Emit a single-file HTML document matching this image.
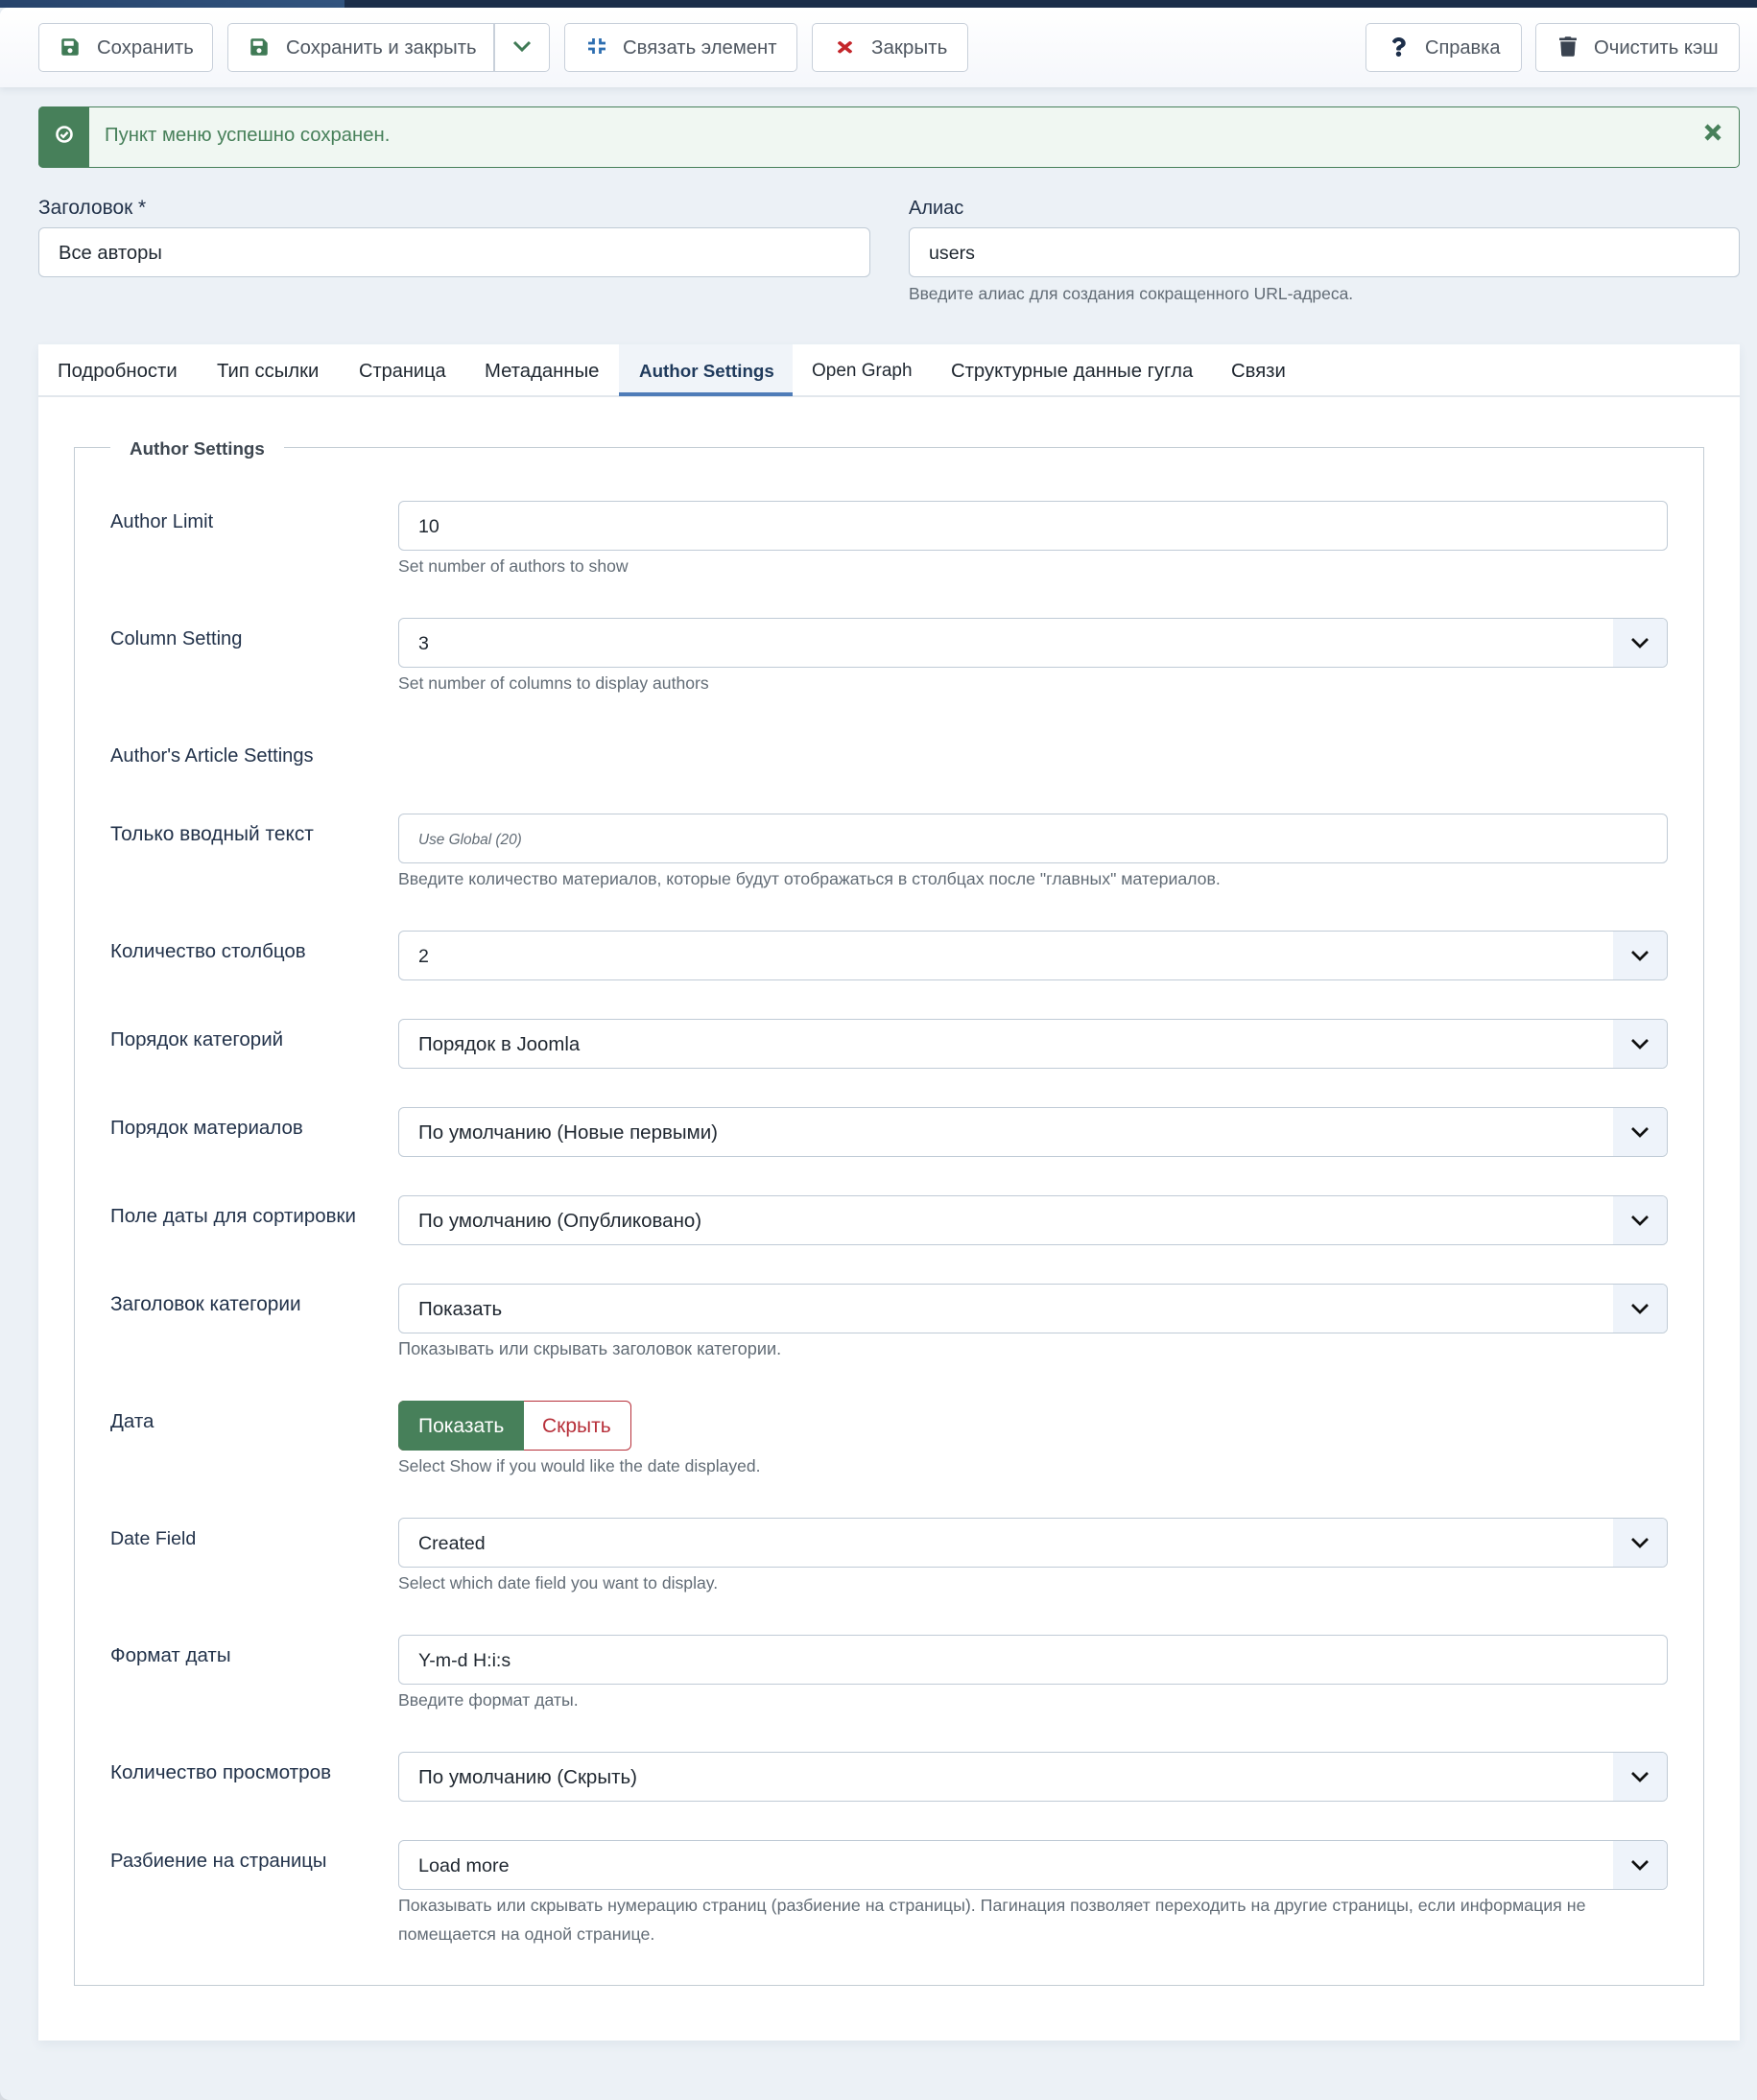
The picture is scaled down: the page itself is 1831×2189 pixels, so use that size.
<!DOCTYPE html>
<html lang="ru">
<head>
<meta charset="utf-8">
<title>Author Settings</title>
<style>
html,body{margin:0;padding:0;width:1831px;height:2189px;overflow:hidden;background:#d5dae0}
*{box-sizing:border-box}
#p{position:relative;width:1831px;height:2189px;background:#ecf1f6;overflow:hidden;border-bottom-left-radius:10px;font-family:"Liberation Sans",sans-serif;font-size:19px;color:#22324a}
#p>*{position:absolute}
.t{white-space:nowrap;line-height:30px;height:30px;margin-top:1.4px}
.lb{left:115px;color:#22324a;font-size:20.5px}
.le{font-size:20.1px}
.v{left:436px;color:#1f2730;font-size:20.5px;margin-top:.5px}
.ve{font-size:19.6px}
.h{left:415px;color:#626c76;font-size:17.8px}
.he{font-size:17.6px}
.b{top:24px;height:51px;background:#fff;border:1.5px solid #c8d0da;border-radius:5px}
.bt{top:34px;color:#4f5761;font-size:20.3px}
.i{left:415px;width:1323px;height:52px;background:#fff;border:1.5px solid #c0cbd6;border-radius:6px}
.s:after{content:"";position:absolute;right:0;top:0;bottom:0;width:56px;background:#eef3fa;border-radius:0 5px 5px 0}
.c{left:1698px;width:22px;height:14px;z-index:2}
.tb{top:371px;color:#1f2730;font-size:20.3px}
svg{display:block}
</style>
</head>
<body>
<div id="p">
<div style="left:0;top:0;width:1831px;height:8px;background:#1c2e4a"></div>
<div style="left:0;top:0;width:359px;height:8px;background:linear-gradient(90deg,#28446c,#32547f)"></div>
<div style="left:0;top:8px;width:1831px;height:83px;background:linear-gradient(180deg,#fff,#f5f7fb);border-top-left-radius:8px;box-shadow:0 2px 8px rgba(60,80,110,.12)"></div>

<div class="b" style="left:40px;width:182px"></div>
<div class="b" style="left:237px;width:336px"></div>
<div style="left:514px;top:24px;width:1.5px;height:51px;background:#c8d0da"></div>
<div class="b" style="left:588px;width:243px"></div>
<div class="b" style="left:846px;width:163px"></div>
<div class="b" style="left:1423px;width:162.5px"></div>
<div class="b" style="left:1600px;width:213px"></div>

<svg style="left:64px;top:38.5px" width="18" height="20" viewBox="0 0 448 512" fill="#3f7a55"><path d="M433.941 129.941l-83.882-83.882A48 48 0 0 0 316.118 32H48C21.49 32 0 53.49 0 80v352c0 26.51 21.49 48 48 48h352c26.51 0 48-21.49 48-48V163.882a48 48 0 0 0-14.059-33.941zM224 416c-35.346 0-64-28.654-64-64 0-35.346 28.654-64 64-64s64 28.654 64 64c0 35.346-28.654 64-64 64zm96-304.52V212c0 6.627-5.373 12-12 12H76c-6.627 0-12-5.373-12-12V108c0-6.627 5.373-12 12-12h228.52c3.183 0 6.235 1.264 8.485 3.515l3.48 3.48A11.996 11.996 0 0 1 320 111.48z"/></svg>
<svg style="left:261px;top:38.5px" width="18" height="20" viewBox="0 0 448 512" fill="#3f7a55"><path d="M433.941 129.941l-83.882-83.882A48 48 0 0 0 316.118 32H48C21.49 32 0 53.49 0 80v352c0 26.51 21.49 48 48 48h352c26.51 0 48-21.49 48-48V163.882a48 48 0 0 0-14.059-33.941zM224 416c-35.346 0-64-28.654-64-64 0-35.346 28.654-64 64-64s64 28.654 64 64c0 35.346-28.654 64-64 64zm96-304.52V212c0 6.627-5.373 12-12 12H76c-6.627 0-12-5.373-12-12V108c0-6.627 5.373-12 12-12h228.52c3.183 0 6.235 1.264 8.485 3.515l3.48 3.48A11.996 11.996 0 0 1 320 111.48z"/></svg>
<svg style="left:534px;top:42px" width="20" height="12" viewBox="0 0 20 12" fill="none" stroke="#3f7a55" stroke-width="3"><path d="M2 2l8 8 8-8"/></svg>
<svg style="left:613px;top:40px" width="18" height="16" viewBox="0 0 18 16" fill="none" stroke="#2e6eb0" stroke-width="2.8"><path d="M0 5H5.5V0M12.5 0V5H18M0 11H5.5V16M12.5 16V11H18"/></svg>
<svg style="left:873px;top:43px" width="15" height="12.5" viewBox="0 80 352 352" preserveAspectRatio="none" fill="#c4262b"><path d="M242.72 256l100.07-100.07c12.28-12.28 12.28-32.19 0-44.48l-22.24-22.24c-12.28-12.28-32.19-12.28-44.48 0L176 189.28 75.93 89.21c-12.28-12.28-32.19-12.28-44.48 0L9.21 111.45c-12.28 12.28-12.28 32.19 0 44.48L109.28 256 9.21 356.07c-12.28 12.28-12.28 32.19 0 44.48l22.24 22.24c12.28 12.28 32.2 12.28 44.48 0L176 322.72l100.07 100.07c12.28 12.28 32.2 12.28 44.48 0l22.24-22.24c12.28-12.28 12.28-32.19 0-44.48L242.72 256z"/></svg>
<svg style="left:1450px;top:38.5px" width="15" height="20" viewBox="0 0 384 512" fill="#1c2e4a"><path d="M202.021 0C122.202 0 70.503 32.703 29.914 91.026c-7.363 10.58-5.093 25.086 5.178 32.874l43.138 32.709c10.373 7.865 25.132 6.026 33.253-4.148 25.049-31.381 43.63-49.449 82.757-49.449 30.764 0 68.816 19.799 68.816 49.631 0 22.552-18.617 34.134-48.993 51.164-35.423 19.86-82.299 44.576-82.299 106.405V320c0 13.255 10.745 24 24 24h72.471c13.255 0 24-10.745 24-24v-5.773c0-42.86 125.268-44.645 125.268-160.627C377.504 66.256 286.902 0 202.021 0zM192 373.459c-38.196 0-69.271 31.075-69.271 69.271 0 38.195 31.075 69.27 69.271 69.27s69.271-31.075 69.271-69.271-31.075-69.27-69.271-69.27z"/></svg>
<svg style="left:1625px;top:38px" width="18" height="21" viewBox="0 0 448 512" fill="#3a4350"><path d="M432 32H312l-9.4-18.7A24 24 0 0 0 281.1 0H166.8a23.72 23.72 0 0 0-21.4 13.3L136 32H16A16 16 0 0 0 0 48v32a16 16 0 0 0 16 16h416a16 16 0 0 0 16-16V48a16 16 0 0 0-16-16zM53.2 467a48 48 0 0 0 47.9 45h245.8a48 48 0 0 0 47.9-45L416 128H32z"/></svg>

<div class="t bt" style="left:101px">Сохранить</div>
<div class="t bt" style="left:298px">Сохранить и закрыть</div>
<div class="t bt" style="left:649px">Связать элемент</div>
<div class="t bt" style="left:908px;font-size:20.6px">Закрыть</div>
<div class="t bt" style="left:1485px;font-size:20px">Справка</div>
<div class="t bt" style="left:1661px">Очистить кэш</div>

<div style="left:40px;top:111px;width:1773px;height:64px;background:#f0f7f2;border:1.5px solid #47805a;border-radius:5px"></div>
<div style="left:40px;top:111px;width:53px;height:64px;background:#47805a;border-radius:5px 0 0 5px"></div>
<svg style="left:57px;top:130px" width="20" height="20" viewBox="0 0 20 20" fill="none" stroke="#fff"><circle cx="10" cy="10" r="7.5" stroke-width="2.6"/><path d="M6.4 10.2l2.6 2.6 4.6-5" stroke-width="2.4"/></svg>
<div class="t" style="left:109px;top:125px;color:#47805a;font-size:20.3px">Пункт меню успешно сохранен.</div>
<svg style="left:1776px;top:129px" width="18" height="18" viewBox="0 0 18 18" fill="none" stroke="#47805a" stroke-width="4.5"><path d="M2 2l14 14M16 2L2 16"/></svg>

<div class="t" style="left:40px;top:201px;font-size:20.9px;color:#22324a">Заголовок *</div>
<div class="t" style="left:947px;top:201px;font-size:20px;color:#22324a">Алиас</div>
<div class="i" style="left:40px;top:237px;width:867px"></div>
<div class="i" style="left:947px;top:237px;width:866px"></div>
<div class="t v" style="left:61px;top:248px;font-size:20.2px">Все авторы</div>
<div class="t v ve" style="left:968px;top:248px">users</div>
<div class="t h" style="left:947px;top:290px;font-size:17.5px">Введите алиас для создания сокращенного URL-адреса.</div>

<div style="left:40px;top:359px;width:1773px;height:1768px;background:#fff;box-shadow:0 4px 10px rgba(60,80,110,.07)"></div>
<div style="left:40px;top:412px;width:1773px;height:1.5px;background:#e2e7ec"></div>
<div style="left:645px;top:359px;width:181px;height:54px;background:#f0f4f9;border-bottom:4px solid #4f7cb8"></div>
<div class="t tb" style="left:60px">Подробности</div>
<div class="t tb" style="left:226px">Тип ссылки</div>
<div class="t tb" style="left:374px;font-size:20px">Страница</div>
<div class="t tb" style="left:505px">Метаданные</div>
<div class="t tb" style="left:666px;font-weight:bold;color:#1f3a5c;font-size:18.8px">Author Settings</div>
<div class="t tb" style="left:846px;font-size:19px">Open Graph</div>
<div class="t tb" style="left:991px">Структурные данные гугла</div>
<div class="t tb" style="left:1283px">Связи</div>

<div style="left:77px;top:466px;width:1699px;height:1604px;border:1.5px solid #c3ccd4"></div>
<div style="left:115px;top:460px;width:181px;height:14px;background:#fff"></div>
<div class="t" style="left:135px;top:452px;font-weight:bold;font-size:18.8px;color:#3d4650">Author Settings</div>

<div class="t lb le" style="top:528px">Author Limit</div>
<div class="i" style="top:522px"></div>
<div class="t v ve" style="top:533px">10</div>
<div class="t h he" style="top:574px">Set number of authors to show</div>

<div class="t lb le" style="top:650px">Column Setting</div>
<div class="i s" style="top:644px"></div>
<div class="t v ve" style="top:655px">3</div>
<svg class="c" style="top:663px" viewBox="0 0 22 14" fill="none" stroke="#111" stroke-width="2.7"><path d="M3 3l8 8 8-8"/></svg>
<div class="t h he" style="top:696px">Set number of columns to display authors</div>

<div class="t lb le" style="top:772px">Author's Article Settings</div>

<div class="t lb" style="top:854px;font-size:20.9px">Только вводный текст</div>
<div class="i" style="top:848px"></div>
<div class="t" style="left:436px;top:858px;margin-top:2.8px;font-style:italic;font-size:15.4px;color:#626c76">Use Global (20)</div>
<div class="t h" style="top:900px;font-size:17.7px">Введите количество материалов, которые будут отображаться в столбцах после "главных" материалов.</div>

<div class="t lb" style="top:976px">Количество столбцов</div>
<div class="i s" style="top:970px"></div>
<div class="t v ve" style="top:981px">2</div>
<svg class="c" style="top:989px" viewBox="0 0 22 14" fill="none" stroke="#111" stroke-width="2.7"><path d="M3 3l8 8 8-8"/></svg>

<div class="t lb" style="top:1068px">Порядок категорий</div>
<div class="i s" style="top:1062px"></div>
<div class="t v" style="top:1073px;font-size:20.4px">Порядок в Joomla</div>
<svg class="c" style="top:1081px" viewBox="0 0 22 14" fill="none" stroke="#111" stroke-width="2.7"><path d="M3 3l8 8 8-8"/></svg>

<div class="t lb" style="top:1160px">Порядок материалов</div>
<div class="i s" style="top:1154px"></div>
<div class="t v" style="top:1165px">По умолчанию (Новые первыми)</div>
<svg class="c" style="top:1173px" viewBox="0 0 22 14" fill="none" stroke="#111" stroke-width="2.7"><path d="M3 3l8 8 8-8"/></svg>

<div class="t lb" style="top:1252px">Поле даты для сортировки</div>
<div class="i s" style="top:1246px"></div>
<div class="t v" style="top:1257px">По умолчанию (Опубликовано)</div>
<svg class="c" style="top:1265px" viewBox="0 0 22 14" fill="none" stroke="#111" stroke-width="2.7"><path d="M3 3l8 8 8-8"/></svg>

<div class="t lb" style="top:1344px;font-size:20.8px">Заголовок категории</div>
<div class="i s" style="top:1338px"></div>
<div class="t v" style="top:1349px">Показать</div>
<svg class="c" style="top:1357px" viewBox="0 0 22 14" fill="none" stroke="#111" stroke-width="2.7"><path d="M3 3l8 8 8-8"/></svg>
<div class="t h" style="top:1390px;font-size:18.2px">Показывать или скрывать заголовок категории.</div>

<div class="t lb" style="top:1466px">Дата</div>
<div style="left:415px;top:1460px;width:243px;height:52px;border:1.5px solid #b7303a;border-radius:6px;background:#fff"></div>
<div style="left:415px;top:1460px;width:131px;height:52px;background:#47805a;border-radius:6px 0 0 6px"></div>
<div class="t v" style="left:436px;top:1471px;color:#fff;font-size:21px">Показать</div>
<div class="t v" style="left:565px;top:1471px;color:#b7303a;font-size:21px">Скрыть</div>
<div class="t h he" style="top:1512px;font-size:17.5px">Select Show if you would like the date displayed.</div>

<div class="t lb le" style="top:1588px;font-size:19.6px">Date Field</div>
<div class="i s" style="top:1582px"></div>
<div class="t v ve" style="top:1593px">Created</div>
<svg class="c" style="top:1601px" viewBox="0 0 22 14" fill="none" stroke="#111" stroke-width="2.7"><path d="M3 3l8 8 8-8"/></svg>
<div class="t h he" style="top:1634px">Select which date field you want to display.</div>

<div class="t lb" style="top:1710px">Формат даты</div>
<div class="i" style="top:1704px"></div>
<div class="t v ve" style="top:1715px">Y-m-d H:i:s</div>
<div class="t h" style="top:1756px;font-size:17.7px">Введите формат даты.</div>

<div class="t lb" style="top:1832px;font-size:20.7px">Количество просмотров</div>
<div class="i s" style="top:1826px"></div>
<div class="t v" style="top:1837px">По умолчанию (Скрыть)</div>
<svg class="c" style="top:1845px" viewBox="0 0 22 14" fill="none" stroke="#111" stroke-width="2.7"><path d="M3 3l8 8 8-8"/></svg>

<div class="t lb" style="top:1924px;font-size:20.3px">Разбиение на страницы</div>
<div class="i s" style="top:1918px"></div>
<div class="t v ve" style="top:1929px;font-size:19.8px">Load more</div>
<svg class="c" style="top:1937px" viewBox="0 0 22 14" fill="none" stroke="#111" stroke-width="2.7"><path d="M3 3l8 8 8-8"/></svg>
<div class="t h" style="top:1970px">Показывать или скрывать нумерацию страниц (разбиение на страницы). Пагинация позволяет переходить на другие страницы, если информация не</div>
<div class="t h" style="top:2000px">помещается на одной странице.</div>
</div>
</body>
</html>
